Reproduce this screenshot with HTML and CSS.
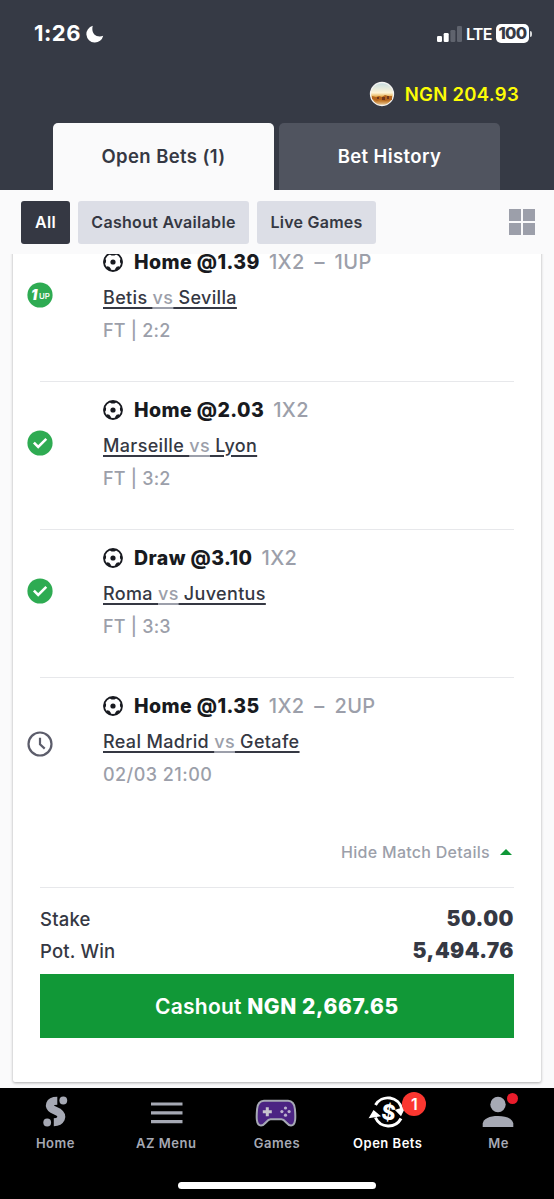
FILE: index.html
```
<!DOCTYPE html>
<html lang="en">
<head>
<meta charset="utf-8">
<title>Open Bets</title>
<link rel="stylesheet" href="styles.css">
</head>
<body>
<svg class="defs" width="0" height="0" aria-hidden="true">
  <symbol id="ball" viewBox="0 0 20 20">
    <circle cx="10" cy="10" r="9" fill="none" stroke="#181a20" stroke-width="1.800"/>
    <circle cx="10" cy="10" r="2.600" fill="#181a20"/>
    <path d="M5.500 1.600 8.500 3.600h3L14.500 1.600Q10 .2 5.500 1.600ZM18.600 5.500 16.900 8.200 17.100 10.500 19 12.800Q19.900 9.500 18.600 5.500ZM1.400 5.500 3.100 8.200 2.900 10.500 1 12.800Q.1 9.500 1.400 5.500ZM3.700 16.200 4 14.300 6.300 14.800 7.800 16.800 8 18.800Q5.400 18.200 3.700 16.200ZM16.300 16.200 16 14.300 13.700 14.800 12.200 16.800 12 18.800Q14.600 18.200 16.300 16.200Z" fill="#181a20"/>
  </symbol>
  <symbol id="check" viewBox="0 0 26 26">
    <circle cx="13" cy="13" r="12.600" fill="#2eab52"/>
    <path d="m6.900 12.700 4.300 4.300L19.300 8.900" fill="none" stroke="#fff" stroke-width="2.600"/>
  </symbol>
</svg>
<header class="header">
  <div class="statusbar">
    <span class="time">1:26</span>
    <svg class="moon" width="18" height="18" viewBox="0 0 18 18"><path d="M6.800 .8A8.500 8.500 0 1 0 17.200 10.800C10 13.200 4.700 8 6.800 .8Z" fill="#fff"/></svg>
    <svg class="signal" width="26" height="16" viewBox="0 0 26 16"><rect x="0" y="10" width="5" height="6" rx="1.300" fill="#fff"/><rect x="6.700" y="7" width="5" height="9" rx="1.300" fill="#fff"/><rect x="13.400" y="4" width="5" height="12" rx="1.300" fill="#5f636d"/><rect x="20" y="0" width="5" height="16" rx="1.300" fill="#5f636d"/></svg>
    <span class="lte">LTE</span>
    <span class="battery">100</span><i class="battery-tip"></i>
  </div>
  <div class="balance">
    <svg width="26" height="26" viewBox="0 0 26 26">
      <defs><linearGradient id="sky" x1="0" y1="0" x2="0" y2="1"><stop offset="0" stop-color="#c5dce2"/><stop offset=".45" stop-color="#fff4d5"/><stop offset=".6" stop-color="#e7b45b"/><stop offset=".8" stop-color="#c27828"/><stop offset="1" stop-color="#f0d3a4"/></linearGradient></defs>
      <circle cx="13" cy="13" r="11.500" fill="url(#sky)" stroke="#f4f3f2" stroke-width="1.300"/>
      <path d="M3 15l4 1 3-1 3 1 3-2 3 1h4v4l-7 1-5-1-3 1-5-2Z" fill="#b5651d"/><path d="M8 16h2v2H8ZM13 16h3v3h-3ZM18 15h2v3h-2Z" fill="#71371c"/>
    </svg>
    <span>NGN 204.93</span>
  </div>
  <nav class="tabs"><div class="tab tab-active">Open Bets (1)</div><div class="tab">Bet History</div></nav>
</header>
<div class="filters">
  <span class="chip chip-dark">All</span><span class="chip chip-cashout">Cashout Available</span><span class="chip chip-live">Live Games</span>
  <div class="grid-icon"><i></i><i></i><i></i><i></i></div>
</div>
<main class="viewport">
  <section class="card">
    <article class="bet">
      <svg class="state" width="26" height="26" viewBox="0 0 26 26"><circle cx="13" cy="13" r="12.600" fill="#2eab52"/><text x="4" y="17.700" class="one">1</text><text x="12" y="17.200" class="up">UP</text></svg>
      <div class="info">
        <div class="pick"><svg width="20" height="20"><use href="#ball"/></svg><b>Home @1.39</b><span class="market">1X2 <i>–</i> 1UP</span></div>
        <div class="match"><span>Betis <em>vs</em> Sevilla</span></div><div class="result">FT | 2:2</div>
      </div>
    </article>
    <article class="bet">
      <svg class="state" width="26" height="26"><use href="#check"/></svg>
      <div class="info">
        <div class="pick"><svg width="20" height="20"><use href="#ball"/></svg><b>Home @2.03</b><span class="market">1X2</span></div>
        <div class="match"><span>Marseille <em>vs</em> Lyon</span></div><div class="result">FT | 3:2</div>
      </div>
    </article>
    <article class="bet">
      <svg class="state" width="26" height="26"><use href="#check"/></svg>
      <div class="info">
        <div class="pick"><svg width="20" height="20"><use href="#ball"/></svg><b>Draw @3.10</b><span class="market">1X2</span></div>
        <div class="match"><span>Roma <em>vs</em> Juventus</span></div><div class="result">FT | 3:3</div>
      </div>
    </article>
    <article class="bet bet-pending">
      <svg class="state" width="26" height="26" viewBox="0 0 26 26" fill="none" stroke="#5c5d6b" stroke-width="2.200"><circle cx="13" cy="13" r="11.500"/><path d="M13 6.800v6.500l4.700 4.300"/></svg>
      <div class="info">
        <div class="pick"><svg width="20" height="20"><use href="#ball"/></svg><b>Home @1.35</b><span class="market">1X2 <i>–</i> 2UP</span></div>
        <div class="match"><span>Real Madrid <em>vs</em> Getafe</span></div><div class="result result-date">02/03 21:00</div>
      </div>
    </article>
    <div class="toggle"><span>Hide Match Details</span><svg width="12" height="6" viewBox="0 0 12 6"><path d="M0 6 6 0l6 6Z" fill="#0f9737"/></svg></div>
    <div class="totals">
      <div class="total"><span class="label-stake">Stake</span><b class="stake">50.00</b></div>
      <div class="total"><span class="label-win">Pot. Win</span><b class="win">5,494.76</b></div>
    </div>
    <div class="cashout"><span>Cashout <b>NGN 2,667.65</b></span></div>
  </section>
</main>
<footer class="navbar">
  <div class="items">
    <div class="item"><svg width="36" height="36" viewBox="0 0 36 36"><g fill="#a6a9b4"><circle cx="26.300" cy="8.500" r="3.900"/><circle cx="10.200" cy="30.500" r="3.900"/></g><path d="M20.300 8.800C11.800 8.800 11.200 15 15.400 17.200L21.500 20.300C27 24 24 30.200 16.800 30.200" fill="none" stroke="#a6a9b4" stroke-width="8"/></svg><span>Home</span></div>
    <div class="item"><svg width="36" height="36" viewBox="0 0 36 36"><path d="M3 12h31.500M3 20.800h31.500M3 29.700h31.500" stroke="#a6a9b4" stroke-width="3.200"/></svg><span>AZ Menu</span></div>
    <div class="item"><svg class="pad" width="42" height="36" viewBox="0 0 42 36"><path d="M9 8.800H33C37 9 39.500 12.300 39.900 17C40.400 23 41.500 33.500 36 33.500C31.500 33.500 30.500 27.300 26.500 27.300H15.500C11.500 27.300 10.500 33.500 6 33.500C.5 33.500 1.600 23 2.100 17C2.500 12.300 5 9 9 8.800Z" fill="#4b2483" stroke="#a6a9b4" stroke-width="2"/><path d="M12.300 15.200v9M7.800 19.700h9" stroke="#c7c4ce" stroke-width="3"/><g fill="#bcb3ce"><circle cx="30.500" cy="16" r="1.600"/><circle cx="26.900" cy="19.600" r="1.600"/><circle cx="34.100" cy="19.600" r="1.600"/><circle cx="30.500" cy="23.200" r="1.600"/></g></svg><span>Games</span></div>
    <div class="item item-active"><svg width="40" height="36" viewBox="0 0 40 36"><path d="M7.500 13A14.300 14.300 0 0 1 33.800 17M33 26.500A14.300 14.300 0 0 1 7.400 25.500" fill="none" stroke="#fff" stroke-width="3"/><path d="M28.300 18.300 36.300 15.800 32.800 23ZM2 25.300 5.700 19.200 11.300 23.800Z" fill="#fff" stroke="#fff" stroke-width="1.500"/><text x="0" y="0" class="dollar" transform="translate(12.800 26.800) rotate(8)">$</text></svg><span>Open Bets</span><b class="badge">1</b></div>
    <div class="item"><svg class="person" width="36" height="36" viewBox="0 0 36 36"><circle cx="18" cy="12.500" r="7.700" fill="#a6a9b4"/><path d="M2.700 35v-3.500C3.500 26.500 9.500 24 18 24s14.500 2.500 15.300 7.500V35Z" fill="#a6a9b4"/></svg><span>Me</span><i class="dot"></i></div>
  </div>
  <div class="home-bar"></div>
</footer>
</body>
</html>
```
FILE: styles.css
```
* { box-sizing: border-box; }
body { margin: 0; width: 554px; height: 1199px; overflow: hidden; display: flex; flex-direction: column; background: #fafafb; font-family: Inter, "Liberation Sans", sans-serif; color: #353843; white-space: nowrap; }
svg { flex: none; display: block; }
.defs { position: absolute; }

.header { height: 190px; background: #363a45; display: flex; flex-direction: column; flex: none; }
.statusbar { height: 67px; padding: 0 22px 0 34px; display: flex; align-items: center; color: #fff; }
.time { width: 46px; margin-top: -2px; font-size: 22px; font-weight: 700; letter-spacing: .5px; }
.moon { margin-left: 6px; }
.signal { margin-left: auto; }
.lte { margin-left: 3px; width: 26px; font-size: 16px; font-weight: 600; letter-spacing: -.7px; }
.battery { margin-left: 4px; width: 33px; height: 19px; border-radius: 5px; background: #fff; color: #363a45; font-size: 16.5px; line-height: 19px; font-weight: 800; text-align: center; letter-spacing: -.7px; }
.battery-tip { width: 2px; height: 6px; margin-left: 1px; border-radius: 0 2px 2px 0; background: #d7d8da; }
.balance { height: 56px; padding: 0 35px 2px; display: flex; align-items: center; justify-content: flex-end; gap: 10px; color: #fdfd05; font-size: 18.5px; font-weight: 600; letter-spacing: .3px; }
.tabs { height: 67px; padding: 0 54px 0 53px; display: flex; gap: 5px; }
.tab { flex: 1; padding-bottom: 1px; border-radius: 5px 5px 0 0; background: #50545f; color: #fff; display: flex; align-items: center; justify-content: center; font-size: 18.5px; font-weight: 600; letter-spacing: .4px; }
.tab-active { background: #fafafb; color: #353843; }

.filters { height: 64px; flex: none; padding: 0 18px 0 21px; display: flex; align-items: center; gap: 8px; }
.chip { height: 43px; width: 119px; border-radius: 3px; background: #dcdee6; font-size: 16px; font-weight: 600; display: flex; align-items: center; justify-content: center; letter-spacing: .25px; }
.chip-dark { width: 49px; background: #353843; color: #fff; }
.chip-cashout { width: 171px; letter-spacing: .32px; }
.grid-icon { margin-left: auto; display: grid; grid-template-columns: 12px 12px; grid-auto-rows: 12px; gap: 2px; padding-right: 1px; }
.grid-icon i { background: #9c9faa; }

.viewport { height: 834px; flex: none; overflow: hidden; padding: 0 13px; }
.card { margin-top: -20px; height: 848px; padding: 0 27px; background: #fff; border-radius: 2px; box-shadow: 0 1px 3px rgba(0,0,0,.32); }
.bet { height: 148px; display: flex; border-bottom: 1px solid #e7e8eb; padding-top: 13px; }
.state { margin: 35px 0 0 -13px; }
.info { margin-left: 50px; }
.pick { height: 30px; display: flex; align-items: center; color: #181a20; font-size: 19.5px; }
.pick b { margin-left: 11px; font-weight: 800; letter-spacing: .42px; }
.market { margin-left: 9px; color: #9c9faa; font-weight: 500; font-size: 20px; letter-spacing: .4px; }
.market i { font-style: normal; margin: 0 4px; }
.match { height: 38px; line-height: 41px; font-size: 18px; font-weight: 500; letter-spacing: .34px; }
.match span { text-decoration: underline; text-decoration-thickness: 2px; text-underline-offset: 3px; }
.match em { color: #9c9faa; font-style: normal; text-decoration: underline; text-decoration-thickness: 2px; text-underline-offset: 3px; }
.result { height: 30px; line-height: 32px; font-size: 18px; font-weight: 500; color: #9c9faa; letter-spacing: .2px; }
.result-date { letter-spacing: .45px; }
.bet-pending { height: 152px; border: 0; }
.bet-pending .state { margin-top: 40px; }
.one { font-size: 14px; font-weight: 900; font-style: italic; fill: #fff; }
.up { font-size: 7.8px; font-weight: 600; fill: #fff; }
.toggle { height: 58px; display: flex; align-items: center; justify-content: flex-end; gap: 10px; padding: 0 2px 13px 0; border-bottom: 1px solid #e7e8eb; color: #9c9faa; font-size: 16px; font-weight: 500; letter-spacing: .28px; }
.totals { height: 86px; padding-top: 15px; }
.total { height: 32px; display: flex; align-items: center; justify-content: space-between; font-size: 18.5px; font-weight: 500; letter-spacing: .18px; }
.total b { margin-top: -2px; font-size: 21px; font-weight: 900; letter-spacing: .45px; }
.cashout { height: 64px; background: #119837; color: #fff; display: flex; align-items: center; justify-content: center; font-size: 21px; font-weight: 600; letter-spacing: .22px; }
.cashout b { font-weight: 800; letter-spacing: .6px; }

.navbar { height: 111px; background: #000; color: #a6a9b4; }
.items { height: 94px; display: grid; grid-template-columns: repeat(5, 1fr); }
.item { position: relative; display: flex; flex-direction: column; align-items: center; padding-top: 4px; font-size: 13px; font-weight: 600; letter-spacing: .5px; }
.item span { margin-top: 6px; line-height: 18px; }
.pad, .person { margin-left: -2px; }
.item-active { color: #fff; }
.dollar { font-size: 21px; font-weight: 800; fill: #fff; }
.badge { position: absolute; left: 70px; top: 4px; width: 24px; height: 24px; border-radius: 50%; background: #fb3730; color: #fff; font-size: 16px; font-weight: 600; line-height: 24px; text-align: center; letter-spacing: 0; }
.dot { position: absolute; left: 64px; top: 5px; width: 11px; height: 11px; border-radius: 50%; background: #e91c2b; }
.home-bar { width: 198px; height: 7px; margin: 0 auto; border-radius: 4px; background: #fff; }
```
